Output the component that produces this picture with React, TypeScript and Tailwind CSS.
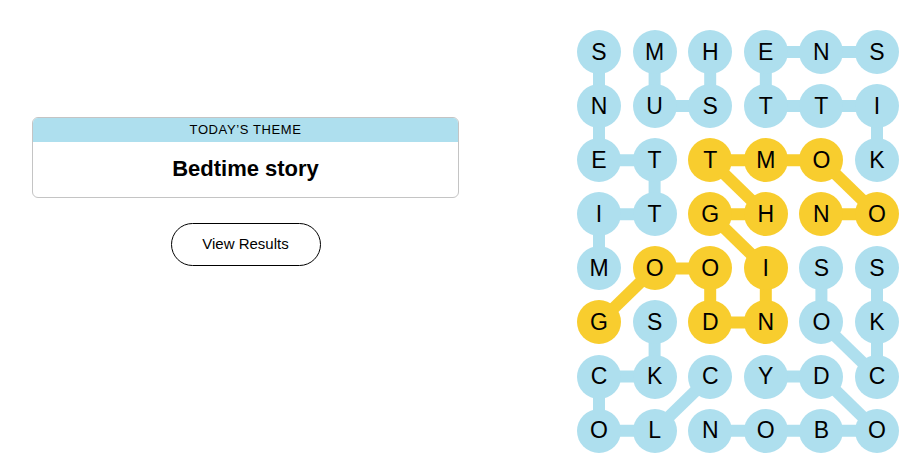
import React from "react";

const rows = [
    "SMHENS",
    "NUSTTI",
    "ETTMOK",
    "ITGHNO",
    "MOOISS",
    "GSDNOK",
    "CKCYDC",
    "OLNOBO",
];

// cells that belong to the spangram
const gold = new Set([
    "2,2", "2,3", "2,4",
    "3,2", "3,3", "3,4", "3,5",
    "4,1", "4,2", "4,3",
    "5,0", "5,2", "5,3",
]);

type Link = [number, number, number, number];

const blueLinks: Link[] = [
    [0, 0, 1, 0], [1, 0, 2, 0], [2, 0, 2, 1], [2, 1, 3, 1], [3, 1, 3, 0], [3, 0, 4, 0],
    [0, 1, 1, 1], [1, 1, 1, 2], [0, 2, 1, 2],
    [0, 3, 0, 4], [0, 4, 0, 5], [0, 3, 1, 3], [1, 3, 1, 4], [1, 4, 1, 5], [1, 5, 2, 5],
    [4, 4, 5, 4], [5, 4, 6, 5], [4, 5, 5, 5], [5, 5, 6, 5],
    [5, 1, 6, 1], [6, 1, 6, 0], [6, 0, 7, 0], [7, 0, 7, 1], [7, 1, 6, 2],
    [6, 3, 6, 4], [6, 4, 7, 5], [7, 5, 7, 4], [7, 4, 7, 3], [7, 3, 7, 2],
];

const goldLinks: Link[] = [
    [2, 2, 2, 3], [2, 3, 2, 4], [2, 2, 3, 3], [2, 4, 3, 5], [3, 4, 3, 5], [3, 2, 3, 3],
    [3, 2, 4, 3], [4, 3, 5, 3], [5, 3, 5, 2], [5, 2, 4, 2], [4, 2, 4, 1], [4, 1, 5, 0],
];

const BLUE = "#aedfee";
const GOLD = "#f8cd2e";
const cx = (c: number) => 22 + c * 55.6;
const cy = (r: number) => 22 + r * 54.1;

function Board() {
    return (
        <div className="relative">
            <svg className="absolute inset-0" width="322" height="423">
                {blueLinks.map(([r1, c1, r2, c2], i) => (
                    <line key={"b" + i} x1={cx(c1)} y1={cy(r1)} x2={cx(c2)} y2={cy(r2)} stroke={BLUE} strokeWidth="12" />
                ))}
                {goldLinks.map(([r1, c1, r2, c2], i) => (
                    <line key={"g" + i} x1={cx(c1)} y1={cy(r1)} x2={cx(c2)} y2={cy(r2)} stroke={GOLD} strokeWidth="12" />
                ))}
            </svg>
            <div className="relative grid grid-cols-[repeat(6,44px)] gap-x-[11.6px] gap-y-[10.1px]">
                {rows.map((row, r) =>
                    row.split("").map((ch, c) => (
                        <div
                            key={r + "-" + c}
                            className={
                                "w-[44px] h-[44px] rounded-full flex items-center justify-center text-[23px] text-black " +
                                (gold.has(r + "," + c) ? "bg-[#f8cd2e]" : "bg-[#aedfee]")
                            }
                        >
                            {ch}
                        </div>
                    ))
                )}
            </div>
        </div>
    );
}

export default function App() {
    return (
        <div className="flex h-[467px] w-[913px] bg-white font-['Liberation_Sans',sans-serif]">
            <div className="ml-8 w-[427px] pt-[117px] flex flex-col items-center">
                <div className="w-[427px] h-[81px] rounded-md border border-[#c4c4c4] overflow-hidden">
                    <div className="h-[24px] bg-[#aedfee] flex items-center justify-center text-[13px] tracking-[0.6px] text-black">
                        TODAY’S THEME
                    </div>
                    <div className="h-[55px] flex items-center justify-center pb-[3px] text-[22px] font-bold text-black">
                        Bedtime story
                    </div>
                </div>
                <button className="mt-[25px] w-[150px] h-[43px] rounded-full border border-black text-[15px] text-black bg-white">
                    View Results
                </button>
            </div>
            <div className="ml-[118px] pt-[30px]">
                <Board />
            </div>
        </div>
    );
}
